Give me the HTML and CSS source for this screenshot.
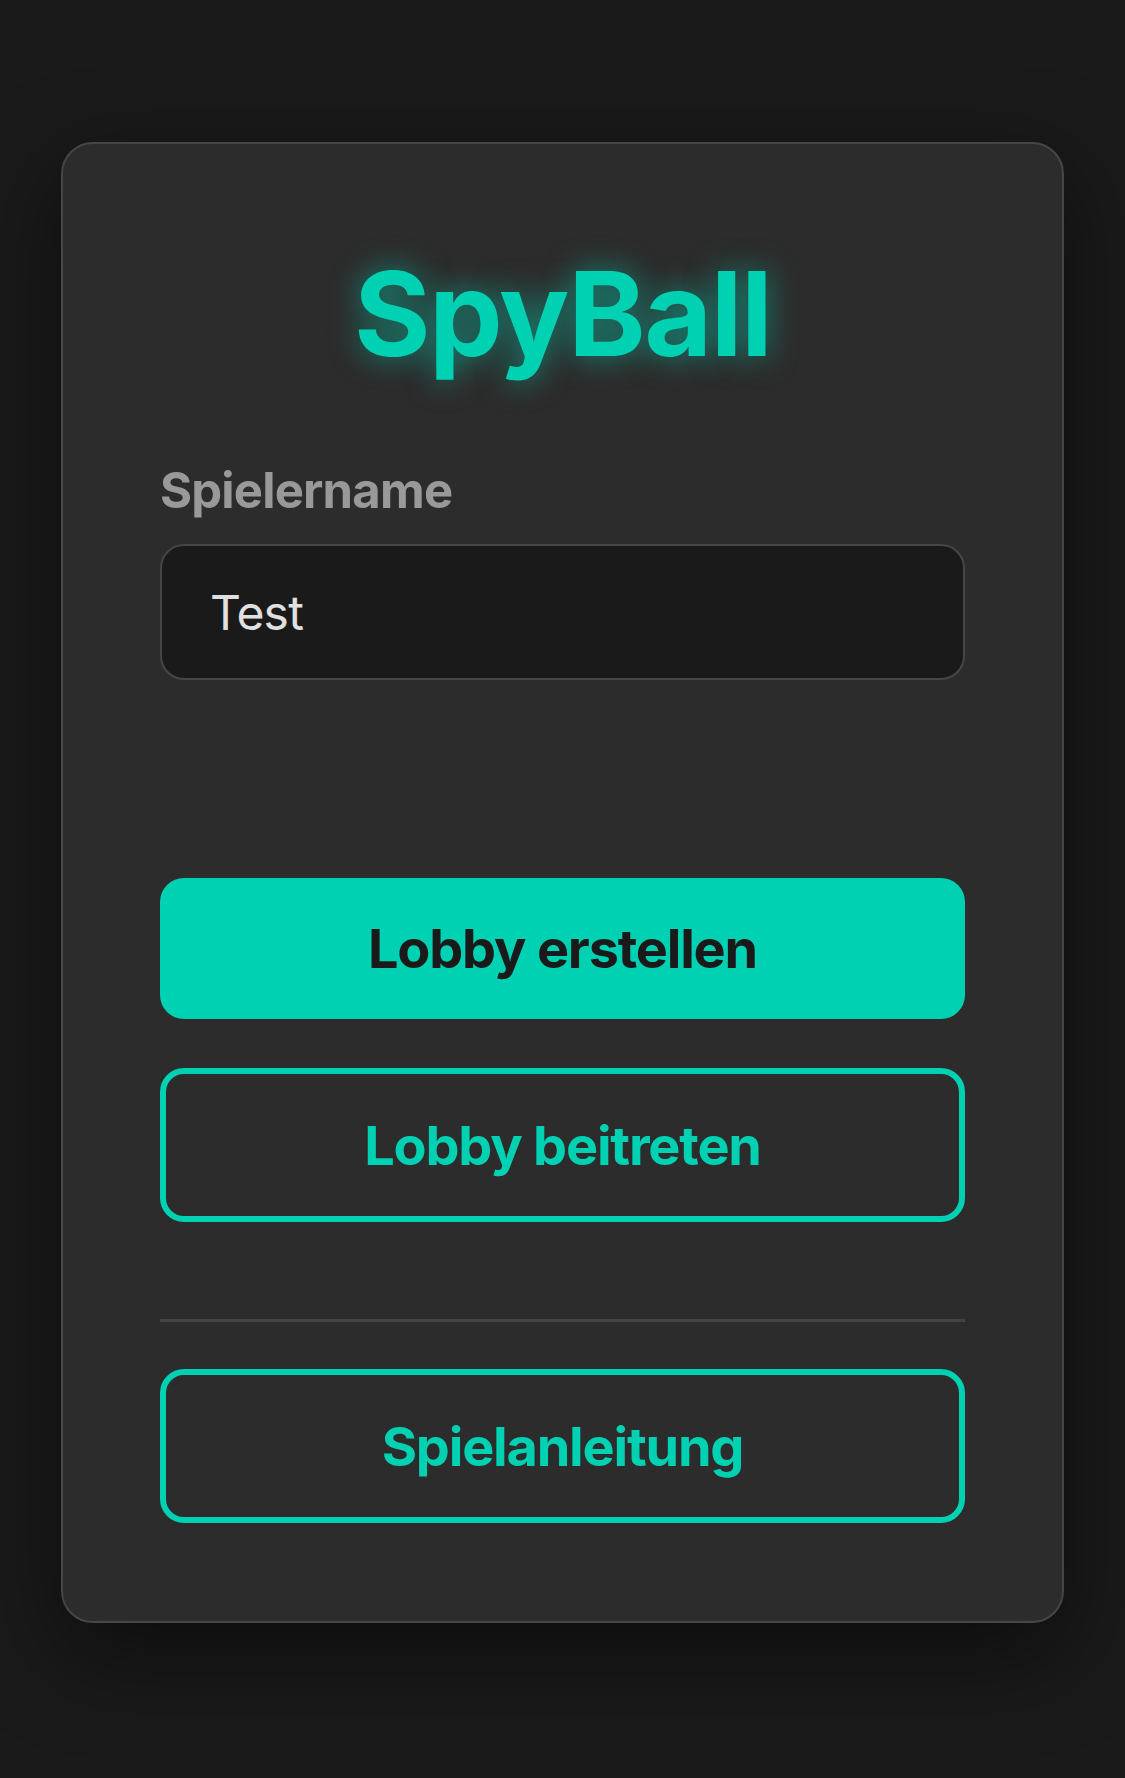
FILE: index.html
```html
<!DOCTYPE html>
<html lang="de">

<head>
    <meta charset="UTF-8">
    <meta name="viewport" content="width=device-width, initial-scale=1.0">
    <title>SpyBall</title>
    <link rel="stylesheet" href="styles.css">
</head>

<body>

    <div class="container">
        <div class="card">
            <h1 class="logo">SpyBall</h1>

            <div class="field">
                <label for="playerName">Spielername</label>
                <input type="text" id="playerName" value="Test">
            </div>

            <div class="actions">
                <button class="btn btn-primary">Lobby erstellen</button>
                <button class="btn btn-outline">Lobby beitreten</button>
            </div>

            <hr class="divider">

            <button class="btn btn-outline">Spielanleitung</button>
        </div>
    </div>

</body>

</html>
```

FILE: styles.css
```css
html,
body {
    margin: 0;
    padding: 0;
    height: 100%;
    background: #1a1a1a;
    font-family: 'Inter', 'Noto Sans', sans-serif;
    color: #e0e0e0;
}

.container {
    box-sizing: border-box;
    min-height: 100%;
    padding: 142px 61px 156px;
}

.card {
    background: #2c2c2c;
    border: 2px solid #464646;
    border-radius: 32px;
    padding: 97px 97px 98px;
    box-shadow: 0 30px 90px rgba(0, 0, 0, 0.5);
    display: flex;
    flex-direction: column;
}

.logo {
    margin: 3px 0 0;
    text-align: center;
    font-size: 117px;
    line-height: 140px;
    font-weight: 700;
    letter-spacing: -1.5px;
    color: #00d1b2;
    text-shadow: 0 0 30px rgba(0, 209, 178, 0.6);
}

.field {
    margin-top: 78px;
    display: flex;
    flex-direction: column;
    gap: 24px;
}

.field label {
    font-size: 49px;
    line-height: 58px;
    font-weight: 650;
    letter-spacing: -0.8px;
    color: #999;
}

.field input {
    box-sizing: border-box;
    height: 136px;
    padding: 0 48px;
    background: #1a1a1a;
    border: 2px solid #464646;
    border-radius: 24px;
    font-family: inherit;
    font-size: 48px;
    letter-spacing: -0.8px;
    color: #e0e0e0;
    outline: none;
}

.actions {
    margin-top: 198px;
    display: flex;
    flex-direction: column;
    gap: 49px;
}

.btn {
    box-sizing: border-box;
    width: 100%;
    height: 141px;
    border: none;
    border-radius: 24px;
    font-family: inherit;
    font-size: 54px;
    font-weight: 700;
    letter-spacing: -1.2px;
    cursor: pointer;
}

.btn-primary {
    background: #00d1b2;
    color: #1a1a1a;
}

.btn-outline {
    height: 154px;
    background: transparent;
    border: 6px solid #00d1b2;
    color: #00d1b2;
}

.divider {
    margin: 97px 0 47px;
    border: none;
    height: 3px;
    background: #444;
}
```
